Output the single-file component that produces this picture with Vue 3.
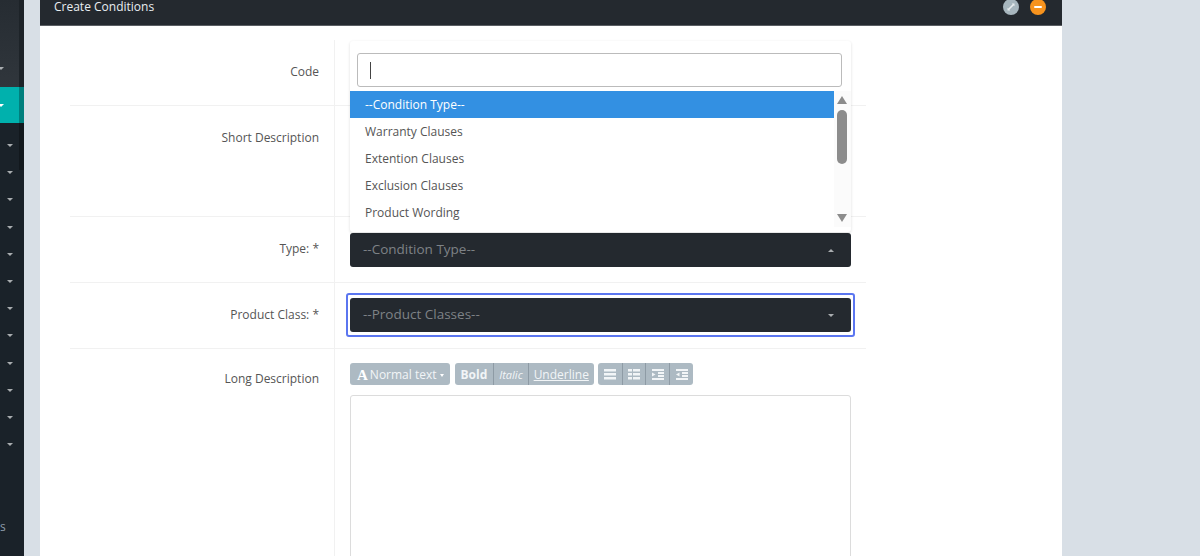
<script setup>
const carets = Array.from({ length: 12 })
const options = ['Warranty Clauses', 'Extention Clauses', 'Exclusion Clauses', 'Product Wording']
</script>

<template>
  <div class="page">
    <aside class="sidebar">
      <div class="side-top"><i class="caret edge"></i></div>
      <div class="side-active"><i class="caret edge white"></i></div>
      <ul class="side-list">
        <li v-for="(c, i) in carets" :key="i"><i class="caret"></i></li>
      </ul>
      <div class="side-foot">s</div>
    </aside>

    <main class="panel">
      <header class="panel-head">
        <h1>Create Conditions</h1>
        <div class="head-btns">
          <span class="round grey">
            <svg width="10" height="10" viewBox="0 0 10 10"><path d="M2.500 7.500 7.500 2.500" fill="none" stroke="#e8edf0" stroke-width="1.600"/><path d="M5.800 1.500H8.500V4.200zM1.500 5.800V8.500H4.200z" fill="#e8edf0"/></svg>
          </span>
          <span class="round orange"><b></b></span>
        </div>
      </header>

      <div class="form">
        <div class="row r1">
          <label>Code</label>
          <div class="val"></div>
        </div>
        <div class="row r2">
          <label>Short Description</label>
          <div class="val"></div>
        </div>
        <div class="row r3">
          <label>Type: *</label>
          <div class="val">
            <div class="select"><span>--Condition Type--</span><i class="caret up"></i></div>
          </div>
        </div>
        <div class="row r3 r4">
          <label>Product Class: *</label>
          <div class="val">
            <div class="select focus"><span>--Product Classes--</span><i class="caret"></i></div>
          </div>
        </div>
        <div class="row r5">
          <label>Long Description</label>
          <div class="val">
            <div class="toolbar">
              <div class="group">
                <span class="tb first"><em class="bigA">A</em>Normal text<i class="mini"></i></span>
              </div>
              <div class="group">
                <span class="tb bold">Bold</span>
                <span class="tb ital">Italic</span>
                <span class="tb und">Underline</span>
              </div>
              <div class="group g3">
                <span class="tb ic"><svg width="14" height="11" viewBox="0 0 14 11"><path d="M1 0h12v2.500H1zM1 4h12v2.500H1zM1 8h12v2.500H1z" fill="#f2f5f7"/></svg></span>
                <span class="tb ic"><svg width="14" height="11" viewBox="0 0 14 11"><path d="M1 0h4v2.500H1zM6 0h7v2.500H6zM1 4h4v2.500H1zM6 4h7v2.500H6zM1 8h4v2.500H1zM6 8h7v2.500H6z" fill="#f2f5f7"/></svg></span>
                <span class="tb ic"><svg width="14" height="11" viewBox="0 0 14 11"><path d="M1 0h12v2H1zM7 3h6v2H7zM7 6h6v2H7zM1 9h12v2H1zM1 3.500l3.500 2-3.500 2z" fill="#f2f5f7"/></svg></span>
                <span class="tb ic"><svg width="14" height="11" viewBox="0 0 14 11"><path d="M1 0h12v2H1zM7 3h6v2H7zM7 6h6v2H7zM1 9h12v2H1zM4.500 3.500 1 5.500l3.500 2z" fill="#f2f5f7"/></svg></span>
              </div>
            </div>
            <div class="editor"></div>
          </div>
        </div>
      </div>

      <div class="dropdown">
        <div class="search"><span class="cursor"></span></div>
        <div class="listwrap">
          <ul class="opts">
            <li class="sel">--Condition Type--</li>
            <li v-for="o in options" :key="o">{{ o }}</li>
          </ul>
          <div class="scroll">
            <i class="arrow au"></i>
            <i class="thumb"></i>
            <i class="arrow ad"></i>
          </div>
        </div>
      </div>
    </main>

    <div class="rest"></div>
  </div>
</template>

<style>
html, body { margin: 0; background: #d8dfe6; overflow: hidden; }
</style>

<style scoped>
.page {
  display: flex;
  width: 1200px;
  height: 556px;
  overflow: hidden;
  background: #d8dfe6;
  font-family: "Open Sans", "Liberation Sans", sans-serif;
  font-size: 12px;
  color: #555;
}
.sidebar {
  position: relative;
  flex: 0 0 24px;
  height: 556px;
  background: #1a2229;
  overflow: hidden;
  margin-right: 15.5px;
}
.side-top {
  height: 87px;
  background: linear-gradient(#262c32, #30363c);
  box-shadow: inset -5px 0 0 #1d2328;
  position: relative;
}
.side-active {
  height: 36px;
  background: #00b1ad;
  box-shadow: inset -5px 0 0 #007f7d;
  position: relative;
}
.side-list {
  list-style: none;
  margin: 0;
  padding: 9px 0 0;
  background: linear-gradient(90deg, transparent 19px, #12181d 19px) no-repeat 0 0 / 100% 47px;
}
.side-list li {
  height: 27.200px;
  position: relative;
}
.side-list .caret { position: absolute; left: 7px; top: 12px; }
.side-top .edge { position: absolute; left: -2px; top: 67px; }
.side-active .edge { position: absolute; left: -2px; top: 17px; }
.side-foot {
  position: absolute;
  left: 0;
  top: 519px;
  font-size: 12px;
  line-height: 16px;
  color: #8c9bab;
}
.caret {
  display: block;
  width: 0;
  height: 0;
  border-left: 3.500px solid transparent;
  border-right: 3.500px solid transparent;
  border-top: 3.500px solid #a9adb0;
}
.caret.white { border-top-color: #fff; }
.caret.up { border-top: 0; border-bottom: 3.500px solid #a9adb0; }

.panel {
  position: relative;
  flex: 0 0 1022.500px;
  height: 556px;
  background: #fff;
  overflow: hidden;
}
.panel-head {
  display: flex;
  align-items: center;
  justify-content: space-between;
  box-sizing: border-box;
  height: 26px;
  padding: 0 16px 12px 14.500px;
  background: #24292f;
  border-bottom: 1px solid #5a5e63;
}
.panel-head h1 {
  margin: 0;
  font-size: 12px;
  font-weight: 400;
  line-height: 12px;
  color: #e9eef2;
}
.head-btns { display: flex; gap: 11px; }
.round {
  display: flex;
  align-items: center;
  justify-content: center;
  width: 16px;
  height: 16px;
  border-radius: 50%;
}
.round.grey { background: #a7b6be; }
.round.orange { background: #f7931e; }
.round.orange b { width: 8px; height: 2px; background: #fff; border-radius: 1px; }

.form { margin: 14px 0 0 30.500px; width: 796px; }
.row {
  display: grid;
  grid-template-columns: 265px 1fr;
  border-bottom: 1px solid #f1f1f1;
  box-sizing: border-box;
}
.r1 { height: 66px; }
.r2 { height: 111px; }
.r3 { height: 66px; }
.r5 { border-bottom: 0; height: 240px; }
.r4 .val { padding-top: 15px; }
.row label {
  display: block;
  box-sizing: border-box;
  padding: 23px 15px 0 0;
  line-height: 17px;
  text-align: right;
  border-right: 1px solid #f1f1f1;
  color: #555;
}
.r5.row label { padding-top: 21px; }
.val { padding: 16px 16px 0 15px; }
.select {
  position: relative;
  display: flex;
  align-items: center;
  justify-content: space-between;
  box-sizing: border-box;
  width: 501px;
  height: 34px;
  padding: 0 17px 0 13px;
  background: #24292f;
  border-radius: 3px;
  font-size: 13.500px;
  color: #7e8286;
}
.select span { margin-top: -2px; }
.select.focus::after {
  content: "";
  position: absolute;
  inset: -5px -4px;
  border: 2px solid #5b76f0;
  border-radius: 3px;
}
.toolbar { display: flex; gap: 5px; margin-top: -2px; }
.group {
  display: flex;
  height: 22px;
  background: #adbac3;
  border-radius: 3px;
  overflow: hidden;
  color: #f2f5f7;
  font-size: 12px;
  line-height: 24px;
}
.g3 { margin-left: -1px; }
.tb { display: flex; align-items: center; padding: 1px 6px 0; border-left: 1px solid #8e9ba5; }
.tb:first-child { border-left: 0; }
.tb.first { padding: 1px 6px 0 7px; }
.bigA { font: 700 15px/22px "Liberation Serif", serif; color: #fff; margin-right: 2px; }
.mini {
  display: block; width: 0; height: 0; margin-left: 3px; margin-top: 2px;
  border-left: 2.500px solid transparent; border-right: 2.500px solid transparent; border-top: 3px solid #fff;
}
.bold { font-weight: 700; }
.ital { font-style: italic; font-size: 11px; padding: 1px 5px 0; }
.und { text-decoration: underline; padding: 1px 5px 0; }
.ic { padding: 0; width: 23.750px; box-sizing: border-box; justify-content: center; }
.editor {
  box-sizing: border-box;
  width: 501px;
  height: 200px;
  margin-top: 10px;
  border: 1px solid #dcdcdc;
  border-radius: 3px;
  background: #fff;
}
.dropdown {
  position: absolute;
  left: 310px;
  top: 41px;
  box-sizing: border-box;
  width: 501.500px;
  height: 191px;
  background: #fff;
  border-radius: 3px;
  box-shadow: 0 1px 3px rgba(0, 0, 0, .14);
  padding-top: 12px;
}
.search {
  display: flex;
  align-items: center;
  box-sizing: border-box;
  width: 485px;
  height: 34px;
  margin-left: 7.500px;
  padding-left: 12px;
  border: 1px solid #bbb;
  border-radius: 3px;
}
.cursor { display: block; width: 1px; height: 17px; background: #444; }
.listwrap { display: flex; margin-top: 4px; }
.opts {
  list-style: none;
  margin: 0;
  padding: 0;
  flex: 0 0 484px;
}
.opts li {
  height: 27px;
  line-height: 28px;
  padding-left: 15.500px;
  color: #555;
}
.opts li.sel { background: #3390e2; color: #fff; }
.scroll {
  position: relative;
  flex: 1;
  height: 136px;
  background: #fbfbfb;
}
.arrow {
  position: absolute; left: 3px; width: 0; height: 0;
  border-left: 5.500px solid transparent; border-right: 5.500px solid transparent;
}
.au { top: 5px; border-bottom: 8px solid #8c8c8c; }
.ad { top: 123px; border-top: 8px solid #8c8c8c; }
.thumb {
  position: absolute; left: 3px; top: 19px; width: 10.500px; height: 54px;
  background: #8c8c8c; border-radius: 5px;
}
.rest { flex: 1; }
</style>
